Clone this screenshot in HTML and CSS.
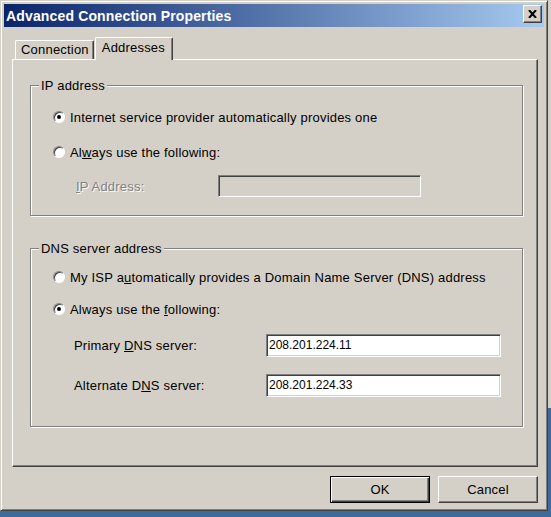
FILE: index.html
```html
<!DOCTYPE html>
<html>

<head>
    <title>Advanced Connection Properties</title>
    <link rel="stylesheet" href="styles.css">
</head>

<body>
    <div class="window">
        <div class="titlebar">
            <span class="title">Advanced Connection Properties</span>
            <button class="close">
                <svg width="9" height="8" viewBox="0 0 9 8">
                    <path d="M1 0 L8 8 M8 0 L1 8" stroke="#000" stroke-width="2" fill="none" />
                </svg>
            </button>
        </div>

        <div class="content">
            <div class="tabs">
                <div class="tab">Connection</div>
                <div class="tab active">Addresses</div>
            </div>

            <div class="panel">
                <!-- IP address -->
                <div class="group group-ip">
                    <span class="legend">IP address</span>
                    <div class="option"><span class="radio checked"></span><span>Internet service provider automatically provides one</span></div>
                    <div class="option second"><span class="radio"></span><span>Al<u>w</u>ays use the following:</span></div>
                    <div class="field field-ip">
                        <span class="field-label disabled"><u>I</u>P Address:</span>
                        <span class="input input-disabled"></span>
                    </div>
                </div>

                <!-- DNS -->
                <div class="group group-dns">
                    <span class="legend">DNS server address</span>
                    <div class="option"><span class="radio"></span><span>My ISP a<u>u</u>tomatically provides a Domain Name Server (DNS) address</span></div>
                    <div class="option second-dns"><span class="radio checked"></span><span>Always use the <u>f</u>ollowing:</span></div>
                    <div class="field field-primary">
                        <span class="field-label">Primary <u>D</u>NS server:</span>
                        <span class="input">208.201.224.11</span>
                    </div>
                    <div class="field field-alternate">
                        <span class="field-label">Alternate D<u>N</u>S server:</span>
                        <span class="input">208.201.224.33</span>
                    </div>
                </div>
            </div>

            <div class="buttons">
                <button class="btn default">OK</button>
                <button class="btn">Cancel</button>
            </div>
        </div>
    </div>
</body>

</html>
```

FILE: styles.css
```css
html {
    height: 100%;
    background:
        linear-gradient(#3d6c9c, #3d6c9c) 548px 408px / 3px 110px no-repeat,
        linear-gradient(#3d6c9c, #3d6c9c) 0 511px / 100% 6px no-repeat,
        #d4d0c8;
}

body {
    margin: 0;
    font-family: "Liberation Sans", Arial, sans-serif;
    font-size: 13px;
    letter-spacing: 0.2px;
    color: #000;
}

* {
    box-sizing: border-box;
}

.window {
    width: 548px;
    height: 511px;
    padding: 3px;
    background: #d4d0c8;
    border: 1px solid;
    border-color: #d4d0c8 #404040 #404040 #d4d0c8;
    box-shadow: inset 1px 1px #fff, inset -1px -1px #808080;
}

/* Barra de titulo */
.titlebar {
    height: 23px;
    display: flex;
    justify-content: space-between;
    align-items: center;
    padding: 0 2px;
    background: linear-gradient(to right, #0a246a, #a6caf0);
}

.title {
    color: #fff;
    font-weight: bold;
    font-size: 14px;
    letter-spacing: 0.15px;
}

.close {
    align-self: flex-start;
    margin-top: 1px;
    width: 19px;
    height: 18px;
    padding: 0;
    display: flex;
    align-items: center;
    justify-content: center;
    background: #d4d0c8;
    border: 1px solid;
    border-color: #fff #404040 #404040 #fff;
    box-shadow: inset -1px -1px #808080;
}

.content {
    padding: 10px 6px 0 8px;
}

/* Abas */
.tabs {
    display: flex;
    align-items: flex-end;
    height: 22px;
    padding-left: 3px;
    position: relative;
    z-index: 1;
}

.tab {
    height: 19px;
    padding: 0 4px 0 5px;
    line-height: 18px;
    background: #d4d0c8;
    border-top: 1px solid #fff;
    border-left: 1px solid #fff;
    border-right: 1px solid #404040;
    box-shadow: inset -1px 0 #808080;
    border-radius: 2px 2px 0 0;
}

.tab.active {
    height: 23px;
    margin-bottom: -1px;
    margin-left: 1px;
    padding: 0 7px 0 6px;
    line-height: 19px;
}

.panel {
    height: 408px;
    padding: 25px 14px 0 17px;
    border: 1px solid;
    border-color: #fff #404040 #404040 #fff;
    box-shadow: inset -1px -1px #808080;
}

/* Caixas de grupo */
.group {
    position: relative;
    padding-left: 22px;
    border: 1px solid #808080;
    box-shadow: inset 1px 1px #fff, 1px 1px #fff;
}

.group-ip {
    height: 131px;
    padding-top: 21px;
}

.group-dns {
    height: 179px;
    margin-top: 32px;
    padding-top: 18px;
}

.legend {
    position: absolute;
    top: -8px;
    left: 8px;
    padding: 0 2px;
    line-height: 15px;
    background: #d4d0c8;
}

.option {
    height: 20px;
    display: flex;
    align-items: center;
    gap: 5px;
}

.option.second {
    margin-top: 15px;
}

.option.second-dns {
    margin-top: 12px;
}

.radio {
    position: relative;
    flex: none;
    width: 12px;
    height: 12px;
    border-radius: 50%;
    background: #fff;
    border: 1px solid;
    border-color: #808080 #fff #fff #808080;
    box-shadow: inset 1px 1px #404040;
}

.radio.checked::after {
    content: "";
    position: absolute;
    left: 3px;
    top: 3px;
    width: 4px;
    height: 4px;
    border-radius: 50%;
    background: #000;
}

.field {
    display: flex;
    align-items: center;
}

.field-ip {
    margin-top: 13px;
    margin-left: 23px;
}

.field-ip .field-label {
    width: 142px;
}

.field-primary {
    margin-top: 15px;
    margin-left: 21px;
}

.field-alternate {
    margin-top: 17px;
    margin-left: 21px;
}

.field-primary .field-label,
.field-alternate .field-label {
    width: 192px;
}

.disabled {
    color: #808080;
    text-shadow: 1px 1px #fff;
}

.input {
    width: 235px;
    height: 23px;
    padding: 0 2px;
    font-size: 12px;
    letter-spacing: 0;
    line-height: 21px;
    background: #fff;
    border: 1px solid;
    border-color: #808080 #fff #fff #808080;
    box-shadow: inset 1px 1px #404040, inset -1px -1px #d4d0c8;
}

.input-disabled {
    width: 203px;
    height: 22px;
    background: #d4d0c8;
}

/* Botoes */
.buttons {
    display: flex;
    justify-content: flex-end;
    gap: 8px;
    margin-top: 9px;
}

.btn {
    width: 100px;
    height: 27px;
    padding: 0;
    font-family: inherit;
    font-size: 13px;
    letter-spacing: 0.2px;
    color: #000;
    background: #d4d0c8;
    border: 1px solid;
    border-color: #fff #404040 #404040 #fff;
    box-shadow: inset -1px -1px #808080;
}

.btn.default {
    border-color: #000;
    box-shadow: inset 1px 1px #fff, inset -1px -1px #404040, inset -2px -2px #808080;
}
```
